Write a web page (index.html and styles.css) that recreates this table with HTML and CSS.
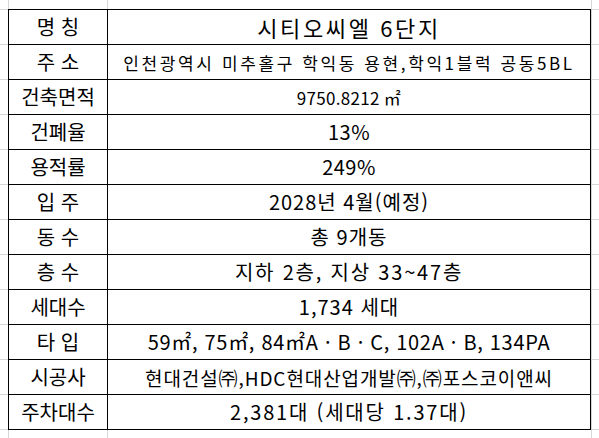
FILE: index.html
```html
<!DOCTYPE html>
<html lang="ko">
<head>
<meta charset="utf-8">
<link rel="stylesheet" href="styles.css">
</head>
<body>
<div class="sheet">
  <div class="info">
    <div class="label">명 칭</div><div class="value name">시티오씨엘 6단지</div>
    <div class="label">주 소</div><div class="value address">인천광역시 미추홀구 학익동 용현,학익1블럭 공동5BL</div>
    <div class="label">건축면적</div><div class="value area">9750.8212 ㎡</div>
    <div class="label">건폐율</div><div class="value tight">13%</div>
    <div class="label">용적률</div><div class="value tight">249%</div>
    <div class="label">입 주</div><div class="value">2028년 4월(예정)</div>
    <div class="label">동 수</div><div class="value">총 9개동</div>
    <div class="label">층 수</div><div class="value wide">지하 2층, 지상 33~47층</div>
    <div class="label">세대수</div><div class="value">1,734 세대</div>
    <div class="label">타 입</div><div class="value types">59㎡, 75㎡, 84㎡A · B · C, 102A · B, 134PA</div>
    <div class="label">시공사</div><div class="value builders">현대건설㈜,HDC현대산업개발㈜,㈜포스코이앤씨</div>
    <div class="label">주차대수</div><div class="value wide">2,381대 (세대당 1.37대)</div>
  </div>
</div>
</body>
</html>
```

FILE: styles.css
```css
html, body {
  margin: 0;
  padding: 0;
}
body {
  width: 599px;
  height: 438px;
  overflow: hidden;
  background-color: #fff;
  background-image:
    linear-gradient(to right, transparent 8px, #d6d6d6 8px, #d6d6d6 9px, transparent 9px,
      transparent 107px, #d6d6d6 107px, #d6d6d6 108px, transparent 108px,
      transparent 591px, #d6d6d6 591px, #d6d6d6 592px, transparent 592px),
    repeating-linear-gradient(to bottom, #d6d6d6 0, #d6d6d6 1px, transparent 1px, transparent 35px);
  background-position: 0 0, 0 9px;
  background-repeat: no-repeat, repeat;
  font-family: "Noto Sans CJK KR", "Noto Sans", sans-serif;
  color: #000;
}
.sheet {
  padding: 9px 0 0 8px;
}
.info {
  display: grid;
  grid-template-columns: 99px 483px;
  grid-auto-rows: 35px;
  width: 583px;
  border-top: 1px solid #000;
  border-left: 1px solid #000;
  box-sizing: border-box;
  background: #fff;
}
.label, .value {
  box-sizing: border-box;
  border-right: 1px solid #000;
  border-bottom: 1px solid #000;
  display: flex;
  align-items: center;
  justify-content: center;
  white-space: nowrap;
  line-height: 1;
}
.label {
  font-size: 20px;
}
.value {
  font-size: 20px;
  letter-spacing: 1px;
}
.value.name {
  font-size: 22px;
  letter-spacing: 2.6px;
}
.value.address {
  font-size: 17px;
  letter-spacing: 2.6px;
}
.value.area {
  font-size: 17px;
  letter-spacing: 0.3px;
}
.value.tight {
  letter-spacing: 0.5px;
}
.value.wide {
  letter-spacing: 1.8px;
}
.value.types {
  letter-spacing: 0.7px;
}
.value.builders {
  font-size: 19px;
  letter-spacing: 0.9px;
}
```
